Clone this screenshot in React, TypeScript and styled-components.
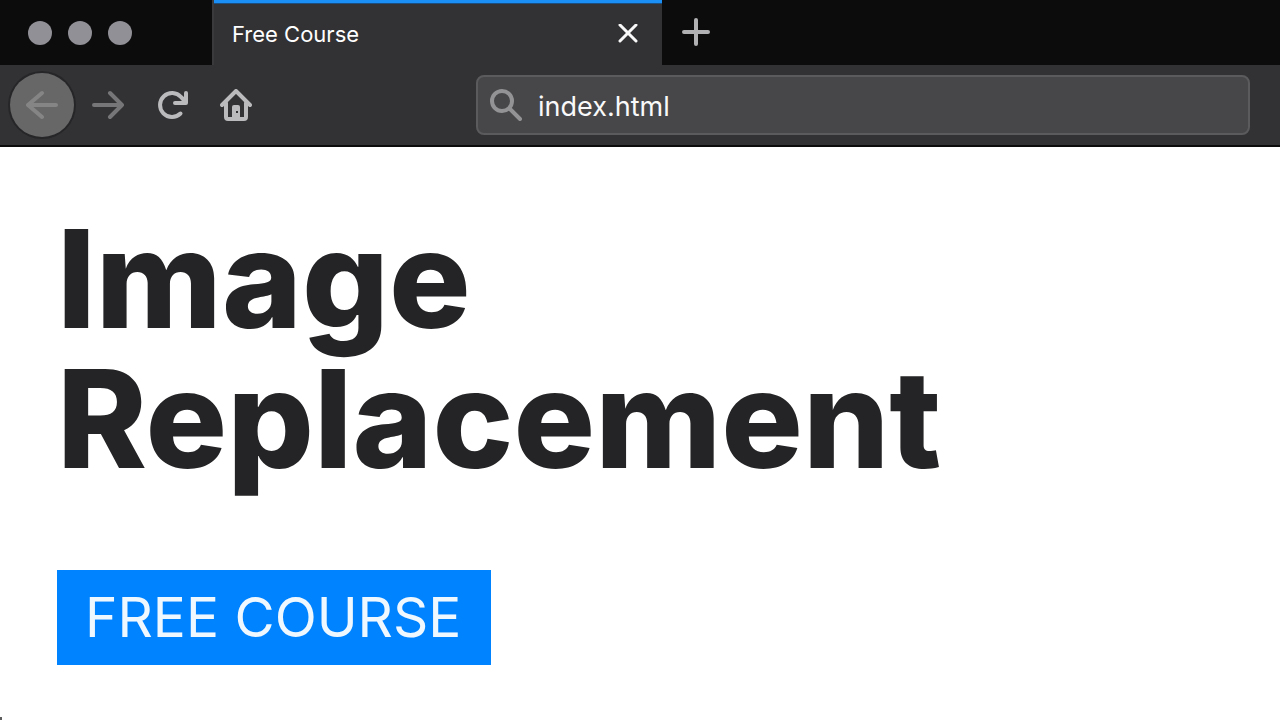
import React from "react";
import styled, { createGlobalStyle } from "styled-components";

const GlobalStyle = createGlobalStyle`
  *, *::before, *::after { box-sizing: border-box; }
  body { margin: 0; background: #fff; }
  button { border: 0; padding: 0; background: none; cursor: pointer; }
`;

const Window = styled.div`
  display: flex;
  flex-direction: column;
  min-height: 100vh;
  font-family: Inter, "Liberation Sans", sans-serif;
`;

const TabStrip = styled.div`
  display: flex;
  height: 65px;
  background: #0c0c0d;
`;

const WindowControls = styled.div`
  display: flex;
  align-items: center;
  gap: 16px;
  width: 212px;
  padding-left: 28px;
`;

const WindowDot = styled.button`
  width: 24px;
  height: 24px;
  border-radius: 50%;
  background: #919097;
`;

const Tab = styled.div`
  display: flex;
  align-items: center;
  justify-content: space-between;
  width: 450px;
  padding: 2px 24px 0 18px;
  border-left: 2px solid #3a3a3c;
  background: #323234;
  box-shadow: inset 0 3px #1a8ff5, inset 0 4px #1c4f80;
`;

const TabTitle = styled.span`
  color: #fff;
  font-size: 22px;
  line-height: 28px;
`;

const IconButton = styled.button<{ $size: number; $tone: string }>`
  display: flex;
  align-items: center;
  justify-content: center;
  flex: none;
  width: ${(p) => p.$size}px;
  height: ${(p) => p.$size}px;
  color: ${(p) => p.$tone};
`;

const NewTabButton = styled(IconButton)`
  align-self: center;
  margin-left: 18px;
`;

const Toolbar = styled.div`
  display: flex;
  align-items: center;
  height: 82px;
  padding: 0 30px 0 10px;
  border-bottom: 2px solid #0c0c0d;
  background: #323234;
`;

const BackButton = styled(IconButton)`
  border-radius: 50%;
  background: #676768;
  box-shadow: 0 0 0 2px #262628;
`;

const ForwardGroup = styled.div`
  display: flex;
  gap: 32px;
  margin: 0 224px 0 18px;
`;

const AddressBar = styled.label`
  display: flex;
  align-items: center;
  gap: 16px;
  flex: 1;
  min-width: 0;
  height: 60px;
  padding: 0 12px;
  border: 2px solid #5b5b5d;
  border-radius: 8px;
  background: #474749;
  color: #939395;
`;

const AddressInput = styled.input`
  flex: 1;
  min-width: 0;
  padding: 4px 0 0;
  border: 0;
  outline: 0;
  background: transparent;
  color: #f9f9fa;
  font: 27px/36px Inter, "Liberation Sans", sans-serif;
`;

const Page = styled.main`
  display: flex;
  flex: 1;
  flex-direction: column;
  align-items: flex-start;
  padding: 62px 57px 52px;
`;

const Heading = styled.h1`
  margin: 0 0 81px;
  color: #242426;
  font-size: 136px;
  font-weight: 800;
  line-height: 140px;
`;

const CourseLink = styled.a`
  padding: 0 30px 0 28px;
  background: #0083ff;
  color: #f0f8ff;
  font-size: 55px;
  font-weight: 400;
  line-height: 95px;
  text-decoration: none;
`;

const StatusMark = styled.footer`
  width: 2px;
  height: 3px;
  background: #5c5c5c;
`;

type IconProps = { size?: number; children: React.ReactNode };

const Icon = ({ size = 32, children }: IconProps) => (
  <svg
    width={size}
    height={size}
    viewBox={`0 0 ${size} ${size}`}
    fill="none"
    stroke="currentColor"
    strokeWidth="4"
    strokeLinecap="round"
    strokeLinejoin="round"
    aria-hidden="true"
  >
    {children}
  </svg>
);

export default function App() {
  return (
    <Window>
      <GlobalStyle />
      <header>
        <TabStrip>
          <WindowControls>
            <WindowDot aria-label="Close window" />
            <WindowDot aria-label="Minimize window" />
            <WindowDot aria-label="Zoom window" />
          </WindowControls>
          <Tab>
            <TabTitle>Free Course</TabTitle>
            <IconButton $size={20} $tone="#f9f9fa" aria-label="Close tab">
              <Icon size={20}>
                <path d="M2 1l16 16M18 1L2 17" strokeWidth="3" />
              </Icon>
            </IconButton>
          </Tab>
          <NewTabButton $size={32} $tone="#b1b1b3" aria-label="New tab">
            <Icon>
              <path d="M16 3v24M4 15h24" />
            </Icon>
          </NewTabButton>
        </TabStrip>
        <Toolbar>
          <BackButton $size={64} $tone="#858586" aria-label="Back">
            <Icon>
              <path d="M30 16H2M16 4L2 16l14 12" />
            </Icon>
          </BackButton>
          <ForwardGroup>
            <IconButton $size={32} $tone="#767678" aria-label="Forward">
              <Icon>
                <path d="M2 16h28M18 4l12 12-12 12" />
              </Icon>
            </IconButton>
            <IconButton $size={32} $tone="#bbbbbd" aria-label="Reload">
              <Icon>
                <path d="M24.500 24.500A12 12 0 1 1 25 8L29 12" />
                <path d="M30 4v10H19" />
                <path d="M30 8v6h-7z" fill="currentColor" stroke="none" />
              </Icon>
            </IconButton>
            <IconButton $size={32} $tone="#bbbbbd" aria-label="Home">
              <Icon>
                <path d="M2 16L16 2l14 14" />
                <path d="M6 14v14a2 2 0 0 0 2 2h16a2 2 0 0 0 2-2V14" />
                <path
                  d="M12 31V18a2 2 0 0 1 2-2h4a2 2 0 0 1 2 2v13z"
                  fill="currentColor"
                  stroke="none"
                />
                <path d="M16 22h2v2h-2z" fill="#323234" stroke="none" />
              </Icon>
            </IconButton>
          </ForwardGroup>
          <AddressBar>
            <Icon>
              <circle cx="12" cy="12" r="10" />
              <path d="M20 20l10 10" />
            </Icon>
            <AddressInput aria-label="Address" defaultValue="index.html" />
          </AddressBar>
        </Toolbar>
      </header>
      <Page>
        <Heading>
          Image
          <br />
          Replacement
        </Heading>
        <CourseLink href="#course">FREE COURSE</CourseLink>
      </Page>
      <StatusMark />
    </Window>
  );
}
